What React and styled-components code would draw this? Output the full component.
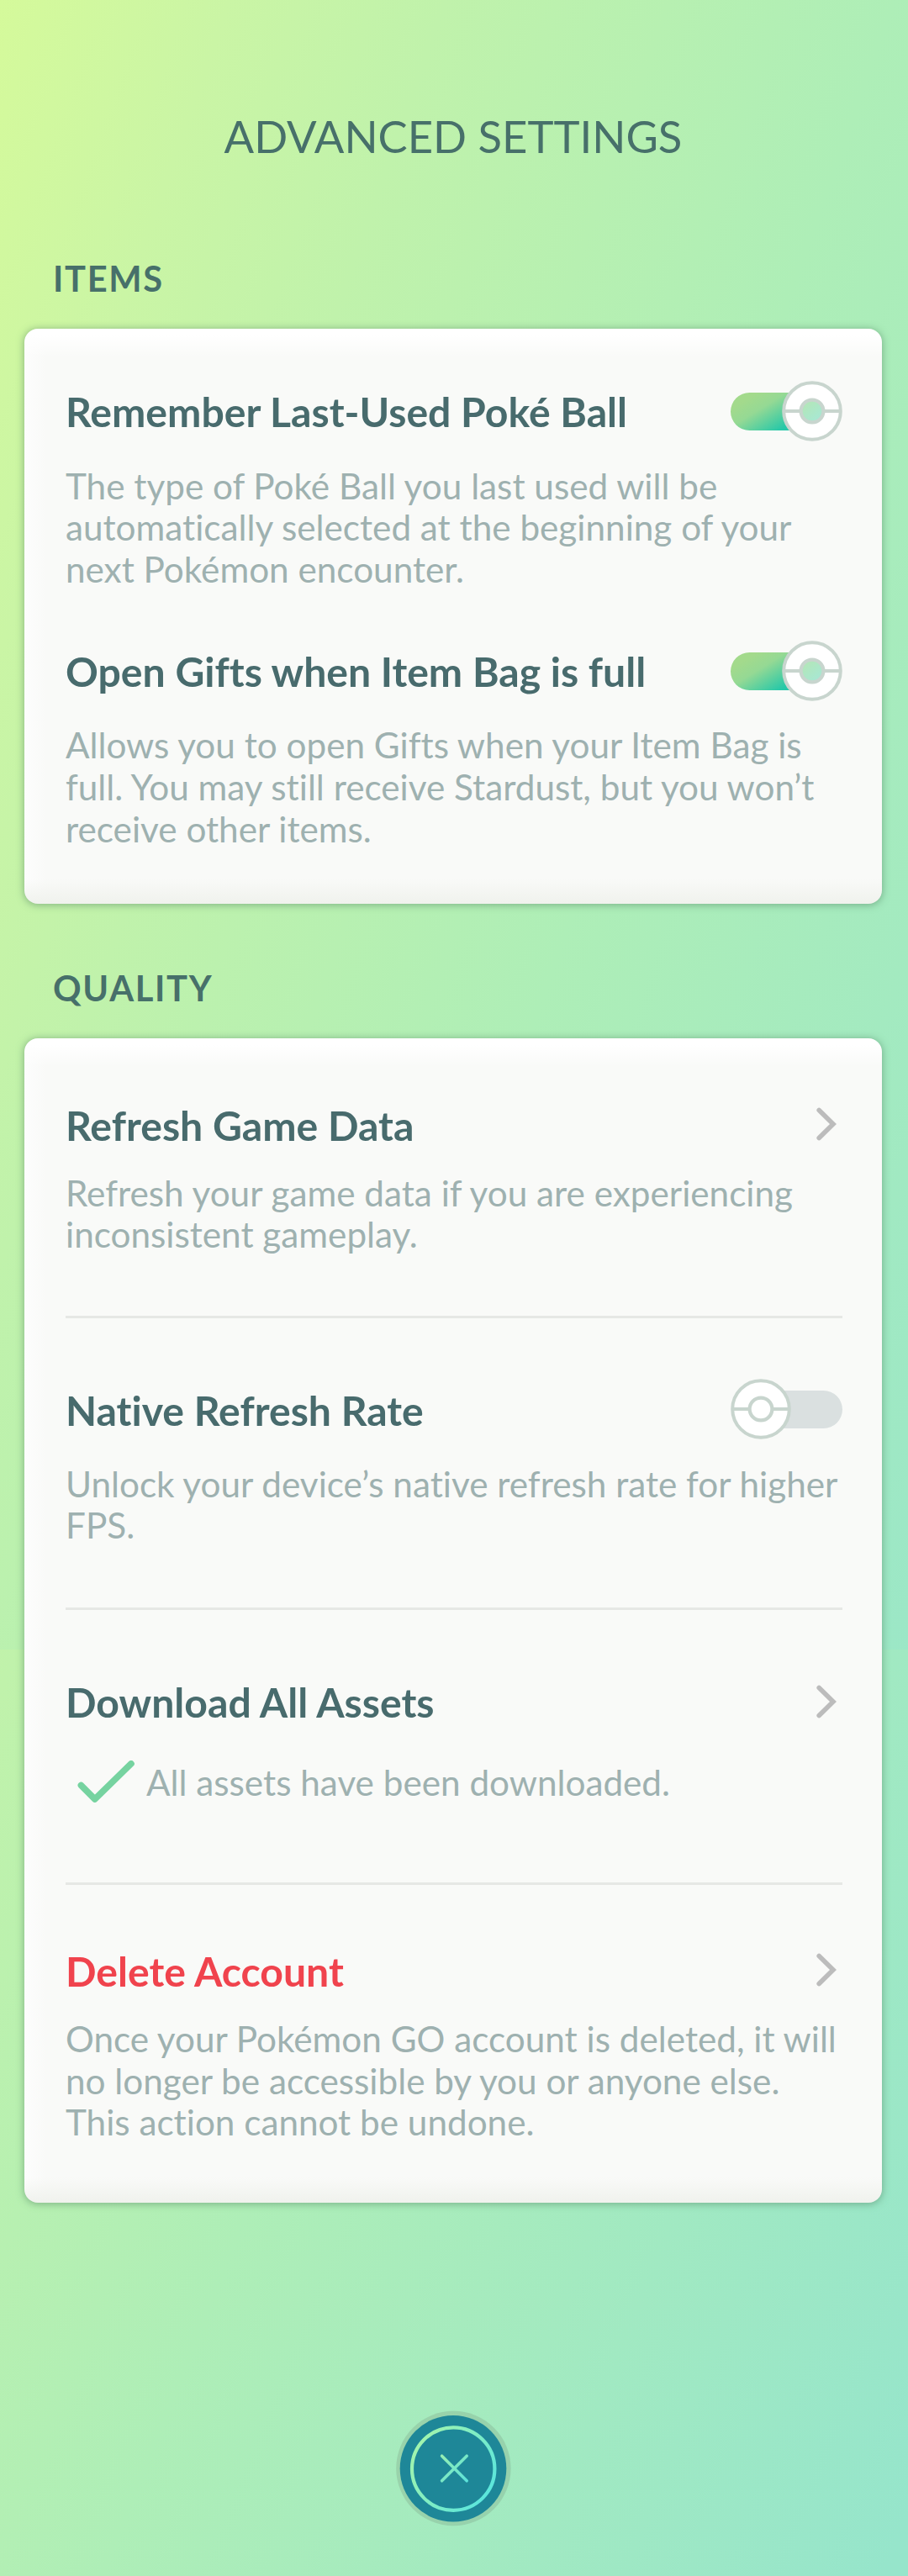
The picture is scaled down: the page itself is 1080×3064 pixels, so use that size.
import React from "react";
import styled, { createGlobalStyle } from "styled-components";

const GlobalStyle = createGlobalStyle`
  * { box-sizing: border-box; }
  body { margin: 0; }
  h1, h2, h3, p { margin: 0; }
`;

const STOPS = "#d5fa9b 0px, #caf5a5 257px, #c0f2ab 500px, #aeeeb7 1003px, #96e5cb 1866px";

const Page = styled.main`
  display: flex;
  flex-direction: column;
  width: 1080px;
  height: 3064px;
  padding: 130px 31px 0 29px;
  font-family: Lato, "Open Sans", sans-serif;
  font-variant-ligatures: none;
  color: #486b6d;
  background:
    linear-gradient(109.4deg, ${STOPS}) 0 0 / 1080px 1962px no-repeat,
    linear-gradient(111.8deg, ${STOPS}) 0 665px / 1080px 2399px no-repeat;
`;

const Title = styled.h1`
  height: 64px;
  line-height: 64px;
  font-size: 52.6px;
  font-weight: 400;
  text-align: center;
  color: #47706a;
`;

const Section = styled.section`
  margin-top: ${(p) => p.$top}px;
`;

const SectionHeading = styled.h2`
  height: 50px;
  line-height: 50px;
  margin-bottom: 35px;
  padding-left: 34px;
  font-size: 41.6px;
  font-weight: 700;
  letter-spacing: 1.7px;
  color: #47706a;
`;

const Card = styled.div`
  height: ${(p) => p.$height}px;
  padding: ${(p) => p.$top}px 47px 0 49px;
  border-radius: 16px;
  background:
    linear-gradient(#ffffff 0, #ffffff 8px, rgba(255, 255, 255, 0) 34px),
    linear-gradient(to top, #f0f2ed 0, rgba(240, 242, 237, 0) 30px),
    linear-gradient(to right, #fdfdfd 0, rgba(253, 253, 253, 0) 26px),
    #f9faf8;
  box-shadow: 0 1px 8px 1px rgba(80, 130, 95, 0.5);
`;

const Entry = styled.article`
  padding-top: ${(p) => p.$top || 0}px;
  padding-bottom: ${(p) => p.$bottom || 0}px;
  border-top: ${(p) => (p.$divided ? "3px solid #e6e8e5" : "0")};
`;

const EntryHeader = styled.header`
  display: flex;
  align-items: center;
  justify-content: space-between;
  height: 72px;
`;

const EntryTitle = styled.h3`
  padding-top: 1px;
  font-size: 48.15px;
  font-weight: 700;
  line-height: 58px;
  color: ${(p) => (p.$danger ? "#f0434d" : "#486b6d")};
`;

const Description = styled.p`
  margin-top: ${(p) => p.$gap}px;
  font-size: 42.25px;
  line-height: 49.65px;
  color: #9eb1b0;
`;

const StatusRow = styled.div`
  display: flex;
  align-items: center;
  gap: 14px;
  height: 50px;
  margin-top: 35px;
  padding-left: 14px;
`;

const StatusText = styled.p`
  font-size: 42.25px;
  line-height: 50px;
  color: #9eb1b0;
`;

const Icon = styled.svg`
  display: block;
  flex: none;
`;

const ChevronIcon = styled(Icon)`
  margin-right: 6px;
`;

const Footer = styled.footer`
  display: flex;
  justify-content: center;
  margin-top: 247px;
`;

const CloseButton = styled.button`
  width: 138px;
  height: 138px;
  padding: 0;
  border: 0;
  border-radius: 50%;
  background: transparent;
`;

function Toggle({ on }) {
  const cx = on ? 97 : 36;
  return (
    <Icon width="133" height="72" viewBox="0 0 133 72" role="switch" aria-checked={on}>
      <defs>
        <linearGradient id="track" gradientUnits="userSpaceOnUse" x1="22" y1="20" x2="54" y2="72">
          <stop offset="0" stopColor="#a3da8c" />
          <stop offset="0.3" stopColor="#95d994" />
          <stop offset="0.85" stopColor="#27c8a8" />
          <stop offset="1" stopColor="#20c7aa" />
        </linearGradient>
        <linearGradient id="core" x1="0.1" y1="0" x2="0.9" y2="1">
          <stop offset="0" stopColor="#b5e6b4" />
          <stop offset="1" stopColor="#a5e8d8" />
        </linearGradient>
      </defs>
      {on ? (
        <path d="M22.5 14H97V59H22.5A22.5 22.5 0 0 1 22.5 14Z" fill="url(#track)" />
      ) : (
        <path d="M36 14H110.5A22.5 22.5 0 0 1 110.5 59H36Z" fill="#dae0e0" />
      )}
      <circle cx={cx} cy="36" r="33.8" fill="#fff" stroke="#c8d5ce" strokeWidth="4" />
      <path d={`M${cx - 33} 36H${cx + 33}`} stroke="#c8d5ce" strokeWidth="4.2" />
      <circle cx={cx} cy="36" r="13.4" fill={on ? "url(#core)" : "#fff"} stroke="#c8d5ce" strokeWidth="4.2" />
    </Icon>
  );
}

function Chevron() {
  return (
    <ChevronIcon width="26" height="42" viewBox="0 0 26 42" fill="none">
      <path d="M4.2 4.4L21 21L4.2 37.6" stroke="#bcbcbc" strokeWidth="5.6" strokeLinecap="round" />
    </ChevronIcon>
  );
}

function Check() {
  return (
    <Icon width="68" height="52" viewBox="0 0 68 52" fill="none">
      <path
        d="M4.4 29.5L20.8 46L64 3.8"
        stroke="#76d3a0"
        strokeWidth="7.6"
        strokeLinecap="round"
        strokeLinejoin="round"
      />
    </Icon>
  );
}

function CloseGlyph() {
  return (
    <Icon width="138" height="138" viewBox="0 0 138 138" fill="none">
      <defs>
        <linearGradient id="ring" gradientUnits="userSpaceOnUse" x1="25" y1="40" x2="112" y2="98">
          <stop offset="0" stopColor="#a2f4ad" />
          <stop offset="1" stopColor="#5be6dc" />
        </linearGradient>
        <linearGradient id="cross" gradientUnits="userSpaceOnUse" x1="54" y1="54" x2="86" y2="84">
          <stop offset="0" stopColor="#96efb2" />
          <stop offset="1" stopColor="#5be2da" />
        </linearGradient>
      </defs>
      <circle cx="69.4" cy="69" r="68.2" fill="#7a9a80" fillOpacity="0.3" />
      <circle cx="69" cy="69.2" r="63.3" fill="#1e8798" />
      <circle cx="69.2" cy="69.6" r="49.2" stroke="url(#ring)" strokeWidth="4.2" />
      <path
        d="M55.6 54.2L85.2 83.8M85.2 54.2L55.6 83.8"
        stroke="url(#cross)"
        strokeWidth="3.6"
        strokeLinecap="round"
      />
    </Icon>
  );
}

export default function App() {
  return (
    <>
      <GlobalStyle />
      <Page>
        <Title>ADVANCED SETTINGS</Title>

        <Section $top={112}>
          <SectionHeading>ITEMS</SectionHeading>
          <Card $height={684} $top={61.5}>
            <Entry>
              <EntryHeader>
                <EntryTitle>Remember Last-Used Poké Ball</EntryTitle>
                <Toggle on />
              </EntryHeader>
              <Description $gap={28}>
                The type of Poké Ball you last used will be automatically selected at the beginning
                of your next Pokémon encounter.
              </Description>
            </Entry>
            <Entry $top={60.5}>
              <EntryHeader>
                <EntryTitle>Open Gifts when Item Bag is full</EntryTitle>
                <Toggle on />
              </EntryHeader>
              <Description $gap={27.5}>
                Allows you to open Gifts when your Item Bag is full. You may still receive Stardust,
                but you won’t receive other items.
              </Description>
            </Entry>
          </Card>
        </Section>

        <Section $top={75}>
          <SectionHeading>QUALITY</SectionHeading>
          <Card $height={1385} $top={66}>
            <Entry $bottom={72}>
              <EntryHeader>
                <EntryTitle>Refresh Game Data</EntryTitle>
                <Chevron />
              </EntryHeader>
              <Description $gap={20.5}>
                Refresh your game data if you are experiencing inconsistent gameplay.
              </Description>
            </Entry>
            <Entry $divided $top={72.5} $bottom={73}>
              <EntryHeader>
                <EntryTitle>Native Refresh Rate</EntryTitle>
                <Toggle on={false} />
              </EntryHeader>
              <Description $gap={27.5}>
                Unlock your device’s native refresh rate for higher FPS.
              </Description>
            </Entry>
            <Entry $divided $top={72.5} $bottom={94}>
              <EntryHeader>
                <EntryTitle>Download All Assets</EntryTitle>
                <Chevron />
              </EntryHeader>
              <StatusRow>
                <Check />
                <StatusText>All assets have been downloaded.</StatusText>
              </StatusRow>
            </Entry>
            <Entry $divided $top={65.5}>
              <EntryHeader>
                <EntryTitle $danger>Delete Account</EntryTitle>
                <Chevron />
              </EntryHeader>
              <Description $gap={21}>
                Once your Pokémon GO account is deleted, it will no longer be accessible by you or
                anyone else. This action cannot be undone.
              </Description>
            </Entry>
          </Card>
        </Section>

        <Footer>
          <CloseButton aria-label="Close">
            <CloseGlyph />
          </CloseButton>
        </Footer>
      </Page>
    </>
  );
}
